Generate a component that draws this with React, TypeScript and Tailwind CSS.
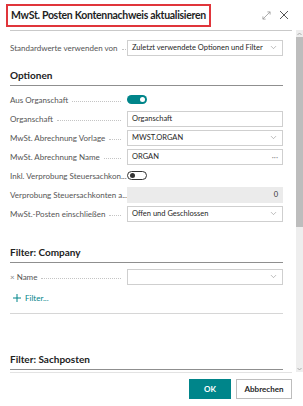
import { ChevronDown } from "lucide-react";

const teal = "bg-[#00858a]";

function Label({ text, prefix }: { text: string; prefix?: string }) {
  return (
    <div className="flex w-[117px] shrink-0 items-center pr-[6px]">
      {prefix && <span className="mr-[2px] text-[8px] text-[#8a8a8a]">{prefix}</span>}
      <span className="whitespace-nowrap text-[8px] text-[#555]">{text}</span>
      <span className="ml-[4px] mt-[3px] min-w-[4px] flex-1 border-b border-dotted border-[#c4c4c4]" />
    </div>
  );
}

function Field({ value, kind }: { value: string; kind?: "select" | "lookup" | "grey" }) {
  if (kind === "grey") {
    return (
      <div className="flex h-[16px] flex-1 items-center justify-end bg-[#ebebeb] px-[5px] text-[7.5px] text-[#333]">
        {value}
      </div>
    );
  }
  return (
    <div className="flex h-[16px] flex-1 items-center justify-between border border-[#cfcfcf] bg-white pl-[4px] pr-[4px] text-[7.5px] text-[#262626]">
      <span className="whitespace-nowrap">{value}</span>
      {kind === "select" && <ChevronDown size={9} strokeWidth={1.5} className="text-[#8a8a8a]" />}
      {kind === "lookup" && <span className="text-[8px] leading-none text-[#8a8a8a]">···</span>}
    </div>
  );
}

function Toggle({ on }: { on: boolean }) {
  return on ? (
    <div className={`flex h-[9px] w-[20px] items-center justify-end rounded-full ${teal} pr-[2px]`}>
      <div className="h-[5px] w-[5px] rounded-full bg-white" />
    </div>
  ) : (
    <div className="flex h-[9px] w-[20px] items-center rounded-full border border-[#333] bg-white pl-[2px]">
      <div className="h-[5px] w-[5px] rounded-full bg-[#333]" />
    </div>
  );
}

function Row({ children }: { children: React.ReactNode }) {
  return <div className="flex h-[19px] items-center">{children}</div>;
}

function Section({ title }: { title: string }) {
  return (
    <div className="border-b border-[#8f8f8f] pb-[2px] text-[10px] font-bold text-[#222]">{title}</div>
  );
}

export default function App() {
  return (
    <div className="flex h-[406px] w-[303px] flex-col overflow-hidden bg-white font-['Lato',sans-serif]">
      <div className="flex h-[30px] shrink-0 items-start pl-[6px] pr-[14px] pt-[4px]">
        <div className="whitespace-nowrap border-2 border-[#e0353b] px-[3px] py-[1px] text-[10.5px] font-bold leading-[17px] tracking-[-0.3px] text-[#1f1f1f]">
          MwSt. Posten Kontennachweis aktualisieren
        </div>
        <div className="ml-auto mt-[6px] flex items-center gap-[8px]">
          <svg width="9" height="9" viewBox="0 0 10 10" fill="none" stroke="#9a9a9a" strokeWidth="0.9">
            <path d="M1 9 L9 1 M6 1 H9 V4 M1 6 V9 H4" />
          </svg>
          <svg width="10" height="10" viewBox="0 0 10 10" fill="none" stroke="#555" strokeWidth="1">
            <path d="M1 1 L9 9 M9 1 L1 9" />
          </svg>
        </div>
      </div>

      <div className="flex min-h-0 flex-1">
        <div className="flex min-w-0 flex-1 flex-col pl-[10px] pr-[13px]">
          <div className="mr-[-9px] border-t border-[#c9c9c9]" />
          <div className="mt-[7px]">
            <Row>
              <Label text="Standardwerte verwenden von" />
              <Field value="Zuletzt verwendete Optionen und Filter" kind="select" />
            </Row>
          </div>

          <div className="mt-[11px]">
            <Section title="Optionen" />
          </div>
          <div className="mt-[4px] flex flex-col">
            <Row>
              <Label text="Aus Organschaft" />
              <Toggle on />
            </Row>
            <Row>
              <Label text="Organschaft" />
              <Field value="Organschaft" />
            </Row>
            <Row>
              <Label text="MwSt. Abrechnung Vorlage" />
              <Field value="MWST.ORGAN" kind="select" />
            </Row>
            <Row>
              <Label text="MwSt. Abrechnung Name" />
              <Field value="ORGAN" kind="lookup" />
            </Row>
            <Row>
              <Label text="Inkl. Verprobung Steuersachkon..." />
              <Toggle on={false} />
            </Row>
            <Row>
              <Label text="Verprobung Steuersachkonten a..." />
              <Field value="0" kind="grey" />
            </Row>
            <Row>
              <Label text="MwSt.-Posten einschließen" />
              <Field value="Offen und Geschlossen" kind="select" />
            </Row>
          </div>

          <div className="mt-[22px]">
            <Section title="Filter: Company" />
          </div>
          <div className="mt-[4px]">
            <Row>
              <Label prefix="×" text="Name" />
              <Field value="" kind="select" />
            </Row>
          </div>
          <div className="mt-[4px] flex h-[16px] items-center gap-[4px] pl-[3px] text-[8px] text-[#00858a]">
            <svg width="8" height="8" viewBox="0 0 8 8" stroke="#00858a" strokeWidth="1">
              <path d="M4 0 V8 M0 4 H8" />
            </svg>
            <span>Filter...</span>
          </div>
          <div className="mt-[7px] border-t border-[#d6d6d6]" />

          <div className="mt-[38px]">
            <Section title="Filter: Sachposten" />
          </div>
        </div>

        <div className="flex w-[7px] shrink-0 flex-col bg-[#eeeeee]">
          <div className="flex h-[7px] items-center justify-center">
            <svg width="5" height="4" viewBox="0 0 5 4" fill="none" stroke="#9a9a9a" strokeWidth="0.8">
              <path d="M0.5 3 L2.5 1 L4.5 3" />
            </svg>
          </div>
          <div className="h-[190px] bg-[#bdbdbd]" />
          <div className="flex-1" />
          <div className="flex h-[7px] items-center justify-center">
            <svg width="5" height="4" viewBox="0 0 5 4" fill="none" stroke="#9a9a9a" strokeWidth="0.8">
              <path d="M0.5 1 L2.5 3 L4.5 1" />
            </svg>
          </div>
        </div>
      </div>

      <div className="flex h-[34px] shrink-0 flex-col pl-[10px] pr-[11px]">
        <div className="border-t border-[#e3e3e3]" />
        <div className="mt-[6px] flex justify-end gap-[5px]">
          <button className={`h-[20px] w-[42px] ${teal} text-[8px] font-bold text-white`}>OK</button>
          <button className="h-[20px] w-[56px] border border-[#bdbdbd] bg-white text-[8px] font-bold text-[#262626]">
            Abbrechen
          </button>
        </div>
      </div>
    </div>
  );
}
